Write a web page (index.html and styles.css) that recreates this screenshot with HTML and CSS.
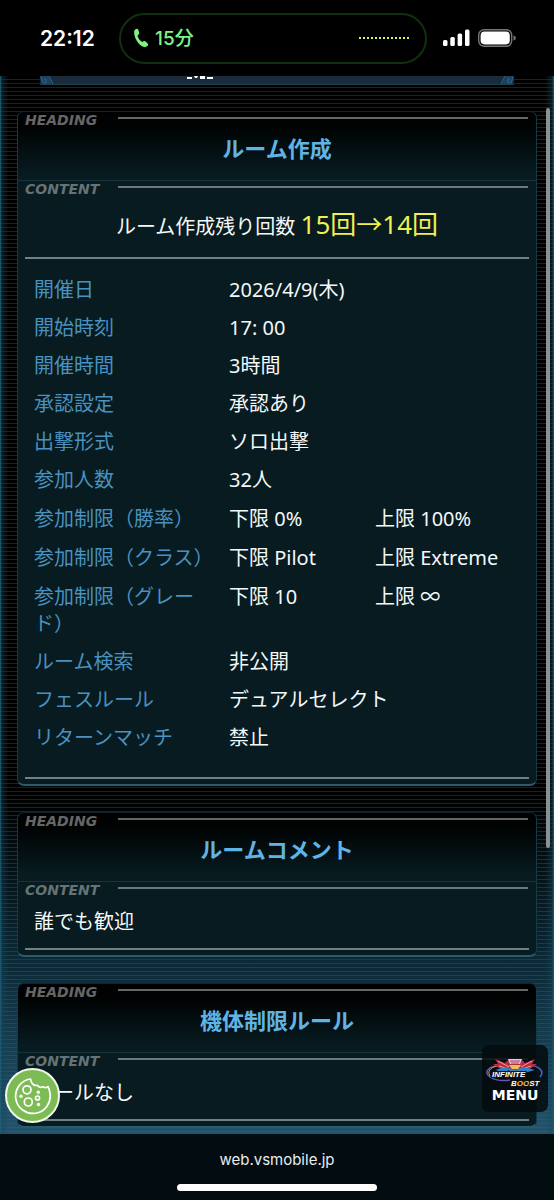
FILE: index.html
```html
<!DOCTYPE html>
<html lang="ja">
<head>
  <meta charset="UTF-8" />
  <meta name="viewport" content="width=device-width, initial-scale=1.0" />
  <title>ルーム作成</title>
  <link rel="stylesheet" href="styles.css">
</head>
<body>
  <header class="status-bar">
    <time class="clock">22:12</time>
    <div class="call-pill">
      <svg class="phone" width="16" height="20" viewBox="0 0 16 20" aria-hidden="true">
        <path d="M1.200 3.200C1.400 1.500 3.200.4 4.300.7c1 .3 2 3.600 1.800 4.800-.1 1-1.600 1.400-1.500 2.300.2 1.800 2.600 5.300 4.200 5.900.9.3 1.700-1 2.700-.8 1.200.2 3.600 2.500 3.600 3.600 0 1.300-1.900 2.700-3.500 2.500C6.300 18.500.4 9.600 1.200 3.200z"/>
      </svg>
      <span>15分</span>
      <span class="wave"></span>
    </div>
    <svg class="signal" width="28" height="18" viewBox="0 0 28 18" aria-hidden="true">
      <rect x="0" y="11" width="4.500" height="6" rx="1.500"/>
      <rect x="7.300" y="8" width="4.500" height="9" rx="1.500"/>
      <rect x="14.600" y="4.500" width="4.500" height="12.500" rx="1.500"/>
      <rect x="22" y="0.500" width="4.500" height="16.500" rx="1.500"/>
    </svg>
    <svg class="battery" width="38" height="18" viewBox="0 0 38 18" aria-hidden="true">
      <rect x="0.700" y="0.700" width="33" height="16.600" rx="5.500" fill="none" stroke="#777" stroke-width="1.400"/>
      <rect x="2.600" y="2.600" width="29.200" height="12.800" rx="3.800" fill="#fff"/>
      <path d="M35.500 6.500c1.600.5 2.300 1.400 2.300 2.500s-.7 2-2.300 2.500z" fill="#777"/>
    </svg>
  </header>

  <main class="page">
    <!-- 上部バーの下端 -->
    <div class="top-tab">
      <svg width="14" height="8" viewBox="0 0 14 8" aria-hidden="true">
        <path d="M0 0h8l4 8H2z" fill="#174465"/>
        <path d="M1 1l2 6M9 0l4 8M4 3h2v4H4" fill="none" stroke="#35658a"/>
      </svg>
      <svg class="tab-mark" width="28" height="4" viewBox="0 0 28 4" aria-hidden="true">
        <path d="M1 1h5v2H1zM8 0h4l-1 2H9zM14 0h5v3h-5zM21 1h6v2h-6z" fill="#fff"/>
      </svg>
      <svg class="flip" width="14" height="8" viewBox="0 0 14 8" aria-hidden="true">
        <path d="M0 0h8l4 8H2z" fill="#174465"/>
        <path d="M1 1l2 6M9 0l4 8M4 3h2v4H4" fill="none" stroke="#35658a"/>
      </svg>
    </div>

    <section class="card">
      <div class="card-head">
        <div class="label"><span>HEADING</span></div>
        <h2>ルーム作成</h2>
      </div>
      <div class="card-body">
        <div class="label light"><span>CONTENT</span></div>
        <p class="count">ルーム作成残り回数 <strong>15回→14回</strong></p>
        <table class="room">
          <colgroup>
            <col class="col-name">
            <col class="col-min">
            <col>
          </colgroup>
          <tr><th scope="row">開催日</th><td colspan="2">2026/4/9(木)</td></tr>
          <tr><th scope="row">開始時刻</th><td colspan="2">17: 00</td></tr>
          <tr><th scope="row">開催時間</th><td colspan="2">3時間</td></tr>
          <tr><th scope="row">承認設定</th><td colspan="2">承認あり</td></tr>
          <tr><th scope="row">出撃形式</th><td colspan="2">ソロ出撃</td></tr>
          <tr><th scope="row">参加人数</th><td colspan="2">32人</td></tr>
          <tr class="limit"><th scope="row">参加制限（勝率）</th><td>下限 0%</td><td>上限 100%</td></tr>
          <tr class="limit"><th scope="row">参加制限（クラス）</th><td>下限 Pilot</td><td>上限 Extreme</td></tr>
          <tr class="limit"><th scope="row">参加制限（グレード）</th><td>下限 10</td><td>上限 ∞</td></tr>
          <tr><th scope="row">ルーム検索</th><td colspan="2">非公開</td></tr>
          <tr><th scope="row">フェスルール</th><td colspan="2">デュアルセレクト</td></tr>
          <tr><th scope="row">リターンマッチ</th><td colspan="2">禁止</td></tr>
        </table>
      </div>
    </section>

    <section class="card">
      <div class="card-head">
        <div class="label"><span>HEADING</span></div>
        <h2>ルームコメント</h2>
      </div>
      <div class="card-body">
        <div class="label light"><span>CONTENT</span></div>
        <p class="text">誰でも歓迎</p>
      </div>
    </section>

    <section class="card">
      <div class="card-head">
        <div class="label"><span>HEADING</span></div>
        <h2>機体制限ルール</h2>
      </div>
      <div class="card-body">
        <div class="label light"><span>CONTENT</span></div>
        <p class="text">ルールなし</p>
      </div>
    </section>

    <div class="scrollbar"></div>

    <button class="cookie" type="button" aria-label="Cookie">
      <svg width="38" height="38" viewBox="0 0 38 38" fill="none" stroke="#fff" stroke-width="1.700" stroke-linejoin="round" aria-hidden="true">
        <path d="M16.500 2A17.300 17.300 0 1 0 36 16.500c-.3-2.800-1-4.800-2-6.800-1.300 1-3.300 1.100-5 .1-2.300 1-4.600.2-5.700-1.500-2.600.8-6-.8-6.800-6.300z"/>
        <circle cx="13" cy="12.800" r="4"/>
        <circle cx="14.300" cy="25" r="4"/>
        <circle cx="23.500" cy="21" r="2"/>
        <g fill="#fff" stroke="none">
          <circle cx="24.300" cy="15.200" r="1.700"/>
          <circle cx="7" cy="19.300" r="1.700"/>
          <circle cx="24.500" cy="27.500" r="1.700"/>
        </g>
      </svg>
    </button>

    <button class="menu" type="button">
      <svg width="60" height="30" viewBox="0 0 60 30" aria-hidden="true">
        <path d="M12 8C2 9-1 15 5 19s14 4 20 3" fill="none" stroke="#6a52b4" stroke-width="1.500"/>
        <path d="M5 18C1 12 8 8 16 7" fill="none" stroke="#d59d42" stroke-width="1"/>
        <path d="M44 7c10 1 16 6 11 12" fill="none" stroke="#4a62b8" stroke-width="1.500"/>
        <path d="M10 1l10 4 4-4h12l4 4 10-4-3 5 5 0-10 7H18L8 6h5z" fill="#b92c44"/>
        <path d="M13 3l11 6M47 3L36 9M14 8l9 3M46 8l-9 3" stroke="#f19aa0" stroke-width="1"/>
        <path d="M10 12l11-3 9 3 9-3 11 3-11 3H21z" fill="#2e82cc"/>
        <path d="M23 1h14l-2 5H25z" fill="#e5c7dd"/>
        <path d="M25 3h10M26 5h8" stroke="#a03c62" stroke-width="1"/>
        <path d="M24 7h12l-3 4h-6z" fill="#eac24a"/>
        <text x="7" y="19" class="logo-text">INFINITE</text>
        <text x="26" y="28" class="logo-text">B<tspan class="gold">OO</tspan>ST</text>
      </svg>
      <span>MENU</span>
    </button>
  </main>

  <footer class="browser-bar">
    <a href="#">web.vsmobile.jp</a>
    <div class="home-indicator"></div>
  </footer>
</body>
</html>
```
FILE: styles.css
```css
* {
  box-sizing: border-box;
}
body {
  margin: 0;
  min-height: 100vh;
  display: flex;
  flex-direction: column;
  background: #000;
  color: #f4f8f8;
  font-family: Inter, "Noto Sans CJK JP", sans-serif;
  font-size: 20px;
  line-height: 27px;
}
h2, p {
  margin: 0;
}
button {
  padding: 0;
  border: 0;
  cursor: pointer;
}

/* status bar */
.status-bar {
  display: flex;
  align-items: center;
  height: 76px;
  padding: 0 38px 0 40px;
}
.clock {
  width: 79px;
  font-size: 21px;
  font-weight: 600;
  color: #fff;
}
.call-pill {
  flex: 1;
  display: flex;
  align-items: center;
  gap: 6px;
  height: 51px;
  padding: 0 16px 0 12px;
  border: 2px solid #10300f;
  border-radius: 26px;
  color: #7df584;
  font-size: 19px;
  font-weight: 500;
}
.phone {
  fill: #7df584;
}
.wave {
  width: 50px;
  height: 2px;
  margin-left: auto;
  background: repeating-linear-gradient(90deg, #dcf552 0 2px, transparent 2px 4px);
}
.signal {
  margin: 0 7px 0 16px;
  fill: #fff;
}

/* page */
.page {
  position: relative;
  flex: 1;
  display: flex;
  flex-direction: column;
  gap: 26px;
  padding: 0 17px 6px;
  font-family: "Noto Sans", "Noto Sans CJK JP", sans-serif;
  background:
    linear-gradient(90deg, #1d6079 0, rgba(20, 70, 90, 0.4) 2px, transparent 9px),
    linear-gradient(270deg, #1d6079 0, rgba(20, 70, 90, 0.4) 2px, transparent 9px),
    repeating-linear-gradient(180deg, transparent 0 3px, rgba(40, 110, 125, 0.35) 3px 4px),
    linear-gradient(180deg, #000 0, #000 68%, #0a2734 83%, #22546c 100%);
}
.top-tab {
  display: flex;
  justify-content: space-between;
  height: 9px;
  margin: 0 23px;
  background: #1a2b3c;
  border-bottom: 1px solid #17414c;
}
.tab-mark {
  margin-right: auto;
  margin-left: 132px;
}
.flip {
  transform: scaleX(-1);
}

/* cards */
.card {
  border: 1px solid #153a44;
  border-top-color: #0c252c;
  border-bottom: 2px solid #2b5a69;
  border-radius: 7px;
  background: #071b20;
  overflow: hidden;
}
.card-head {
  padding-bottom: 17px;
  border-bottom: 1px solid #17343b;
  background: linear-gradient(180deg, #000 0, #010404 25%, #071b20 90%);
}
.card-head h2 {
  padding-top: 6px;
  color: #5fb4e5;
  font-size: 22px;
  font-weight: 700;
  line-height: 30px;
  text-align: center;
}
.label {
  display: flex;
  padding: 2px 8px 0 7px;
  color: #666;
  font-family: "DejaVu Sans", sans-serif;
  font-size: 14px;
  font-style: italic;
  font-weight: 700;
  line-height: 13px;
}
.label span {
  width: 93px;
}
.label::after {
  content: "";
  flex: 1;
  height: 2px;
  margin-top: 3px;
  background: #666;
}
.label.light {
  color: #667376;
}
.label.light::after {
  background: #6b787b;
}
.card-body {
  padding-bottom: 5px;
}
.card-body::after {
  content: "";
  display: block;
  height: 2px;
  margin: 0 7px;
  background: #718084;
}
.count {
  margin: 0 7px;
  padding: 8px 0 10px;
  border-bottom: 2px solid #718084;
  line-height: 40px;
  text-align: center;
}
.count strong {
  color: #f0ef50;
  font-size: 26px;
  font-weight: 400;
}
.text {
  padding: 11px 16px 13px;
}

/* room settings */
.room {
  width: 100%;
  margin: 12px 0 20px;
  border-spacing: 0;
  table-layout: fixed;
}
.col-name {
  width: 211px;
}
.col-min {
  width: 146px;
}
.room th,
.room td {
  padding: 5px 0 6px;
  font-weight: 400;
  text-align: left;
  vertical-align: top;
}
.room th {
  padding-right: 16px;
  padding-left: 16px;
  color: #4a91bf;
}
.room .limit th,
.room .limit td {
  padding-top: 6px;
}

/* overlays */
.scrollbar {
  position: absolute;
  top: 3%;
  right: 4px;
  width: 4px;
  height: 70%;
  border-radius: 2px;
  background: #899193;
}
.cookie {
  position: absolute;
  bottom: 11px;
  left: 5px;
  display: flex;
  align-items: center;
  justify-content: center;
  width: 55px;
  height: 55px;
  border: 2px solid #f1f8e9;
  border-radius: 50%;
  background: #7dbb55;
}
.menu {
  position: absolute;
  right: 6px;
  bottom: 22px;
  display: flex;
  flex-direction: column;
  align-items: center;
  width: 66px;
  height: 67px;
  padding-top: 13px;
  border-radius: 7px;
  background: rgba(3, 10, 13, 0.85);
  color: #fff;
  font-family: "DejaVu Sans", sans-serif;
  font-size: 14px;
  font-weight: 700;
  line-height: 14px;
}
.logo-text {
  fill: #fff;
  stroke: #111;
  stroke-width: 2px;
  paint-order: stroke;
  font-family: "Liberation Sans", sans-serif;
  font-size: 8px;
  font-style: italic;
  font-weight: 700;
}
.gold {
  fill: #f2c63e;
}

/* browser bar */
.browser-bar {
  display: flex;
  flex-direction: column;
  align-items: center;
  gap: 11px;
  height: 67px;
  padding-top: 12px;
  background: #030c11;
  font-size: 15px;
}
.browser-bar a {
  color: #e8edef;
  text-decoration: none;
}
.home-indicator {
  width: 36%;
  height: 7px;
  border-radius: 4px;
  background: #fff;
}
```
